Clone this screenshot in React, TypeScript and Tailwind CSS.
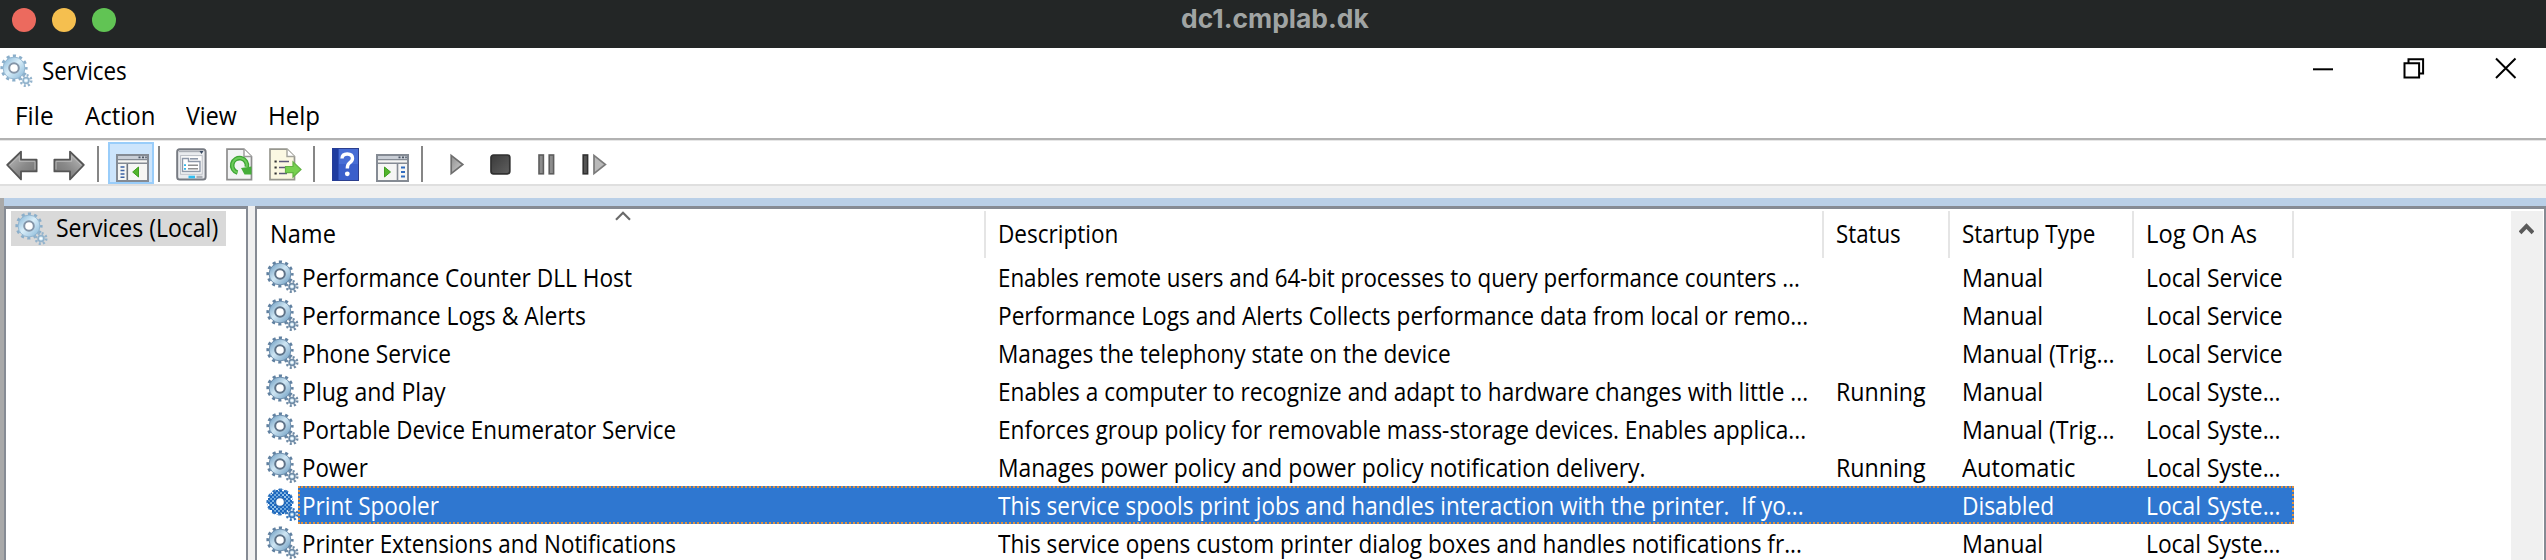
import { useId, useLayoutEffect, useRef } from "react";

/** One line of text, fitted horizontally to the given advance width. */
function Fit({ w, children, className = "" }: { w: number; children: string; className?: string }) {
  const ref = useRef<HTMLSpanElement>(null);
  useLayoutEffect(() => {
    const el = ref.current;
    if (el && el.offsetWidth) el.style.transform = `scaleX(${w / el.offsetWidth})`;
  }, [w, children]);
  return (
    <span ref={ref} className={`inline-block origin-left whitespace-pre ${className}`}>
      {children}
    </span>
  );
}

function Gear({ tone = "light" }: { tone?: "light" | "dark" | "selected" }) {
  const id = useId();
  const c =
    tone === "light"
      ? { edge: "#8aaeca", a: "#d9eef9", b: "#9dc5e0", ring: "#8495a8", small: "#93b3cc" }
      : tone === "dark"
        ? { edge: "#6080a0", a: "#cfe6f3", b: "#86afce", ring: "#5f7388", small: "#6f8ba6" }
        : { edge: "#3f7fc2", a: "#9cc8ec", b: "#5f9edb", ring: "#3b74b4", small: "#3a78bb" };
  return (
    <svg width="33" height="33" viewBox="0 0 33 33" className="shrink-0">
      <defs>
        <linearGradient id={id} x1="0" y1="0" x2="1" y2="1">
          <stop offset="0" stopColor={c.b} />
          <stop offset="0.45" stopColor={c.a} />
          <stop offset="1" stopColor={c.b} />
        </linearGradient>
        <pattern id={`${id}d`} width="4" height="4" patternUnits="userSpaceOnUse">
          <path d="M0 0h2v2H0zM2 2h2v2H2z" fill="#1b66bd" />
        </pattern>
      </defs>
      <circle cx="14" cy="14" r="12" fill="none" stroke={c.edge} strokeWidth="3.2" strokeDasharray="3.1 3.183" strokeDashoffset="1.5" />
      <circle cx="14" cy="14" r="7.6" fill="none" stroke={`url(#${id})`} strokeWidth="7" />
      <circle cx="14" cy="14" r="10.9" fill="none" stroke={c.edge} strokeWidth="0.8" />
      <circle cx="14" cy="14" r="4.8" fill="#fff" stroke={c.ring} strokeWidth="2" />
      {tone === "selected" && <circle cx="14" cy="14" r="8.6" fill="none" stroke={`url(#${id}d)`} strokeWidth="8.4" />}
      <circle cx="26" cy="26.5" r="5.2" fill="none" stroke={c.small} strokeWidth="2.6" strokeDasharray="2 2.08" />
      <circle cx="26" cy="26.5" r="2.9" fill={c.a} stroke={c.small} strokeWidth="1.7" />
      <circle cx="26" cy="26.5" r="1" fill="#fff" />
    </svg>
  );
}

function Arrow({ flip = false }: { flip?: boolean }) {
  const id = useId();
  return (
    <svg width="32" height="34" viewBox="0 0 32 34" className={flip ? "-scale-x-100" : ""}>
      <linearGradient id={id} x1="0" y1="0" x2="1" y2="1">
        <stop offset="0" stopColor="#c4c4c4" />
        <stop offset="0.55" stopColor="#8a8a8a" />
        <stop offset="1" stopColor="#6e6e6e" />
      </linearGradient>
      <path d="M1.2 17L15 3.6V11.6H30.6V23.4H15V31.4Z" fill={`url(#${id})`} stroke="#555" strokeWidth="1.8" strokeLinejoin="round" />
      <path d="M4 17L13.3 8V13.3H29V21.6" fill="none" stroke="#b9b9b9" strokeWidth="1" />
    </svg>
  );
}

function Divider() {
  return <div className="h-9 w-[2px] shrink-0 bg-[#868686]" />;
}

function ConsoleWindow({ mirrored = false }: { mirrored?: boolean }) {
  return (
    <svg width="33" height="28" viewBox="0 0 33 28">
      <rect x="1" y="1" width="31" height="26" fill="#f6f6f4" stroke="#858b94" strokeWidth="2" />
      <rect x="2" y="2" width="29" height="3" fill="#c9ced6" />
      <path d="M2 5.6h29M2 9.2h29" stroke="#858b94" strokeWidth="1.4" />
      <path d="M22.5 3.4h2M26 3.4h2M29.3 3.4h1.4" stroke="#4c5665" strokeWidth="1.8" />
      {mirrored ? (
        <>
          <path d="M21.5 10v16" stroke="#858b94" strokeWidth="1.6" />
          <path d="M25 13.5h4M25 18h4M25 22.5h4" stroke="#2f6cc0" strokeWidth="2" />
          <path d="M8.5 13v10l6-5Z" fill="#52b52b" stroke="#3f9e1f" />
        </>
      ) : (
        <>
          <path d="M11.3 10v16" stroke="#6f7680" strokeWidth="1.6" />
          <path d="M4.5 13h4M4.5 16.5h4M4.5 20h4M4.5 23.3h4" stroke="#3d63a4" strokeWidth="1.6" />
          <path d="M22.5 13v10l-5.8-5Z" fill="#52b52b" stroke="#3f9e1f" />
        </>
      )}
    </svg>
  );
}

function Toolbar() {
  return (
    <div className="flex h-[43px] shrink-0 items-start pl-[6px]">
      <div className="mt-[7px]"><Arrow /></div>
      <div className="mt-[7px] ml-[15px]"><Arrow flip /></div>
      <div className="mt-[5px] ml-[12px]"><Divider /></div>
      <div className="mt-[1px] ml-[9px] h-[42px] w-[46px] border-2 border-[#99cdfa] bg-[#cde5fc] pt-[10px] pl-[6px]">
        <ConsoleWindow />
      </div>
      <div className="mt-[5px] ml-[4px]"><Divider /></div>
      <svg width="31" height="33" viewBox="0 0 31 33" className="mt-[7px] ml-[16px]">
        <rect x="1.2" y="1.2" width="28.4" height="30.4" rx="2.5" fill="#e9ebee" stroke="#777b82" strokeWidth="2" />
        <path d="M3 3.4h24" stroke="#a9adb4" strokeWidth="1.6" />
        <path d="M23.5 3h4l-2 3Z" fill="#394a63" />
        <rect x="4.6" y="7.6" width="21.6" height="18.6" fill="#fdfdfd" stroke="#b9bdc4" strokeWidth="1" />
        <path d="M6.5 23.5V10.5h6v3h11.5v10Z" fill="#fff" stroke="#8e98a8" strokeWidth="1.4" />
        <path d="M14 10.8h8" stroke="#8e98a8" strokeWidth="1.6" />
        <path d="M8 17.2h2M8 20.8h2" stroke="#35b7e8" strokeWidth="1.8" />
        <path d="M12 17.2h10M12 20.8h10" stroke="#8f8f8f" strokeWidth="1.5" />
        <path d="M12.5 29h6.5" stroke="#31bdf0" strokeWidth="2.6" />
        <path d="M20.5 29h6" stroke="#a9adb4" strokeWidth="2.4" />
      </svg>
      <svg width="27" height="33" viewBox="0 0 27 33" className="mt-[7px] ml-[19px]">
        <path d="M1 1.2H18L25.5 8.5V31.6H1Z" fill="#f3f4f5" stroke="#8d8d8d" strokeWidth="1.7" />
        <path d="M18 1.2V8.5H25.5" fill="#fff" stroke="#9a9a9a" strokeWidth="1.4" />
        <path d="M11.5 24.6A7.4 7.4 0 1 1 20.8 19" fill="none" stroke="#3ea535" strokeWidth="4.6" />
        <path d="M11.5 24.6A7.4 7.4 0 1 1 20.8 19" fill="none" stroke="#6ccb5a" strokeWidth="2" />
        <path d="M15 20l10.500-1.500V26.500H18.500Z" fill="#45ad39" />
      </svg>
      <svg width="33" height="33" viewBox="0 0 33 33" className="mt-[7px] ml-[16px]">
        <path d="M1 1.2H18L25.5 8.5V31.6H1Z" fill="#fbf8e2" stroke="#97978f" strokeWidth="1.7" />
        <path d="M18 1.2V8.5H25.5" fill="#fff" stroke="#a3a39b" strokeWidth="1.4" />
        <path d="M5.5 13.5h2.2M5.5 19.5h2.2M5.5 25.5h2.2" stroke="#333" strokeWidth="2.2" />
        <path d="M10 13.5h10M10 19.5h8M10 25.5h8" stroke="#5c5879" strokeWidth="1.6" />
        <path d="M16.5 18.5H24V13.8L32 21.5L24 29V24.6H16.5Z" fill="#76d14e" stroke="#62b344" strokeWidth="1.2" />
      </svg>
      <div className="mt-[5px] ml-[11px]"><Divider /></div>
      <svg width="27" height="33" viewBox="0 0 27 33" className="mt-[7px] ml-[17px]">
        <rect x="0.5" y="0.5" width="26" height="32" fill="#3a5fcb" stroke="#2c3f8e" />
        <rect x="0.5" y="0.5" width="6" height="32" fill="#1f3c9f" />
        <rect x="7" y="1" width="19" height="15" fill="#5077dc" opacity="0.6" />
        <path d="M10 10.5Q10.2 6 15.2 6Q20.5 6 20.5 10.3Q20.5 13 17.6 14.8Q15.3 16.3 15.3 20.5" fill="none" stroke="#fff" strokeWidth="3.4" />
        <circle cx="15.3" cy="25.8" r="2.4" fill="#fff" />
      </svg>
      <div className="mt-[13px] ml-[17px]"><ConsoleWindow mirrored /></div>
      <div className="mt-[5px] ml-[12px]"><Divider /></div>
      <svg width="160" height="23" viewBox="0 0 160 23" className="mt-[12px] ml-[26px]">
        <defs>
          <linearGradient id="run" x1="0" y1="0" x2="1" y2="1">
            <stop offset="0" stopColor="#8f8f8f" />
            <stop offset="1" stopColor="#d0d0d0" />
          </linearGradient>
          <linearGradient id="halt" x1="0" y1="0" x2="1" y2="1">
            <stop offset="0" stopColor="#3a3a3a" />
            <stop offset="1" stopColor="#606060" />
          </linearGradient>
        </defs>
        <path d="M2.2 2.4V20.6L13.8 11.5Z" fill="url(#run)" stroke="#6e6e6e" strokeWidth="1.7" />
        <rect x="42" y="2" width="18.8" height="18.8" rx="2.5" fill="url(#halt)" stroke="#303030" strokeWidth="1.7" />
        <rect x="90" y="2" width="4.4" height="18.8" fill="#8c8c8c" stroke="#5d5d5d" strokeWidth="1.6" />
        <rect x="100.2" y="2" width="4.4" height="18.8" fill="#8c8c8c" stroke="#5d5d5d" strokeWidth="1.6" />
        <rect x="134.2" y="2" width="4.4" height="18.8" fill="#555" stroke="#303030" strokeWidth="1.6" />
        <path d="M145 2.4V20.6L156.4 11.5Z" fill="#b9b9b9" stroke="#7a7a7a" strokeWidth="1.7" />
      </svg>
    </div>
  );
}

type Cell = [string, number];
type Service = { name: Cell; description: Cell; status?: Cell; startup: Cell; logon: Cell; selected?: boolean };

const manual: Cell = ["Manual", 81];
const trigger: Cell = ["Manual (Trig...", 153];
const running: Cell = ["Running", 90];
const localService: Cell = ["Local Service", 137];
const localSystem: Cell = ["Local Syste...", 135];

const services: Service[] = [
  { name: ["Performance Counter DLL Host", 330], description: ["Enables remote users and 64-bit processes to query performance counters ...", 802], startup: manual, logon: localService },
  { name: ["Performance Logs & Alerts", 284], description: ["Performance Logs and Alerts Collects performance data from local or remo...", 810], startup: manual, logon: localService },
  { name: ["Phone Service", 149], description: ["Manages the telephony state on the device", 453], startup: trigger, logon: localService },
  { name: ["Plug and Play", 144], description: ["Enables a computer to recognize and adapt to hardware changes with little ...", 810], status: running, startup: manual, logon: localSystem },
  { name: ["Portable Device Enumerator Service", 374], description: ["Enforces group policy for removable mass-storage devices. Enables applica...", 808], startup: trigger, logon: localSystem },
  { name: ["Power", 66], description: ["Manages power policy and power policy notification delivery.", 648], status: running, startup: ["Automatic", 113], logon: localSystem },
  { name: ["Print Spooler", 137], description: ["This service spools print jobs and handles interaction with the printer.  If yo...", 806], startup: ["Disabled", 92], logon: localSystem, selected: true },
  { name: ["Printer Extensions and Notifications", 374], description: ["This service opens custom printer dialog boxes and handles notifications fr...", 804], startup: manual, logon: localSystem },
];

function Row({ s }: { s: Service }) {
  return (
    <div className="flex h-[38px] w-[2037px] shrink-0 pl-[9px]">
      <div className="w-8 shrink-0 pt-[2px]">
        <Gear tone={s.selected ? "selected" : "dark"} />
      </div>
      <div
        className={`relative grid flex-1 grid-cols-[688px_838px_126px_184px_1fr] leading-[38px] ${s.selected ? "bg-[#2f77d0] text-white" : ""}`}
      >
        {s.selected && <div className="absolute inset-0 border-2 border-dotted border-[#e0913f]" />}
        <div className="pl-[4px]"><Fit w={s.name[1]}>{s.name[0]}</Fit></div>
        <div className="pl-[12px]"><Fit w={s.description[1]}>{s.description[0]}</Fit></div>
        <div className="pl-[12px]">{s.status && <Fit w={s.status[1]}>{s.status[0]}</Fit>}</div>
        <div className="pl-[12px]"><Fit w={s.startup[1]}>{s.startup[0]}</Fit></div>
        <div className="pl-[12px]"><Fit w={s.logon[1]}>{s.logon[0]}</Fit></div>
      </div>
    </div>
  );
}

function ListHeader() {
  const cell = "border-r-2 border-[#e5e5e5] pl-[12px] pt-[3px]";
  return (
    <div className="mt-[2px] grid h-[47px] w-[2037px] shrink-0 grid-cols-[729px_838px_126px_184px_160px] leading-[38px]">
      <div className="relative border-r-2 border-[#e5e5e5] pt-[3px] pl-[13px]">
        <Fit w={66}>Name</Fit>
        <svg width="16" height="10" viewBox="0 0 16 10" className="absolute top-0 left-[358px]">
          <path d="M1 8.8L8 1.8L15 8.8" fill="none" stroke="#6b6b6b" strokeWidth="2.2" />
        </svg>
      </div>
      <div className={cell}><Fit w={120}>Description</Fit></div>
      <div className={cell}><Fit w={65}>Status</Fit></div>
      <div className={cell}><Fit w={133}>Startup Type</Fit></div>
      <div className={cell}><Fit w={111}>Log On As</Fit></div>
    </div>
  );
}

export default function App() {
  return (
    <div className="flex h-[560px] w-[2546px] flex-col overflow-hidden bg-white font-['Open_Sans',sans-serif] text-[25px] text-black">
      <header className="relative flex h-12 shrink-0 items-start justify-center bg-[#232626]">
        <div className="absolute top-2 left-3 flex gap-4">
          <span className="size-6 rounded-full bg-[#ec6a5e]" />
          <span className="size-6 rounded-full bg-[#f5bf4f]" />
          <span className="size-6 rounded-full bg-[#61c454]" />
        </div>
        <div className="ml-[4px] w-[188px] font-['Inter',sans-serif] text-[26px] leading-[38px] font-bold text-[#a0a4a3]">
          <Fit w={188}>dc1.cmplab.dk</Fit>
        </div>
      </header>

      <div className="flex h-11 shrink-0 leading-[44px]">
        <div className="pt-[6px]"><Gear /></div>
        <div className="ml-[9px] flex-1"><Fit w={85}>Services</Fit></div>
        <svg width="206" height="24" viewBox="0 0 206 24" className="mt-[8px] mr-[27px]" fill="none" stroke="#000">
          <path d="M0 13.300h20" strokeWidth="2" />
          <path d="M91.5 7.2h14.6v14.3H91.5ZM95.5 7V3.2h14.6v14.3h-4" strokeWidth="2" />
          <path d="M183 2.5l19.5 19.5M202.5 2.5l-19.5 19.5" strokeWidth="2" />
        </svg>
      </div>

      <nav className="flex h-[46px] shrink-0 pl-[15px] leading-[46px]">
        <div className="w-[70px]"><Fit w={39}>File</Fit></div>
        <div className="w-[101px]"><Fit w={70}>Action</Fit></div>
        <div className="w-[82px]"><Fit w={51}>View</Fit></div>
        <div><Fit w={52}>Help</Fit></div>
      </nav>

      <div className="h-[3px] shrink-0 border-b border-[#e6e6e6] bg-[#b2b2b2]" />
      <Toolbar />
      <div className="h-[2px] shrink-0 bg-[#dfdfdf]" />
      <div className="h-3 shrink-0 bg-[#f0f0f0]" />

      <div className="flex min-h-0 flex-1">
        <div className="w-1 shrink-0 bg-[#a9a9a9]" />
        <div className="flex min-w-0 flex-1 flex-col">
          <div className="h-2 shrink-0 bg-[#b9cfe7]" />
          <div className="flex min-h-0 flex-1 bg-[#f0f0f0]">
            <aside className="w-[244px] shrink-0 border-x-2 border-t-[3px] border-[#868b94] bg-white pl-[5px]">
              <div className="mt-[2px] flex h-[35px] w-[215px] bg-[#d9d9d9] pl-[4px] leading-[33px]">
                <div className="pt-px"><Gear /></div>
                <div className="ml-[8px]"><Fit w={162}>Services (Local)</Fit></div>
              </div>
            </aside>
            <main className="ml-[7px] flex min-w-0 flex-1 border-t-[3px] border-r-2 border-l-2 border-[#868b94] bg-white">
              <section className="flex min-w-0 flex-1 flex-col overflow-hidden">
                <ListHeader />
                {services.map((s) => (
                  <Row key={s.name[0]} s={s} />
                ))}
              </section>
              <div className="mt-[2px] mr-px w-8 shrink-0 bg-[#f0f0f0] pt-[11px] pl-[8px]">
                <svg width="15" height="13" viewBox="0 0 15 13">
                  <path d="M1 10.8L7.5 4.2L14 10.8" fill="none" stroke="#5a5a5a" strokeWidth="4" />
                </svg>
              </div>
            </main>
          </div>
        </div>
      </div>
    </div>
  );
}
